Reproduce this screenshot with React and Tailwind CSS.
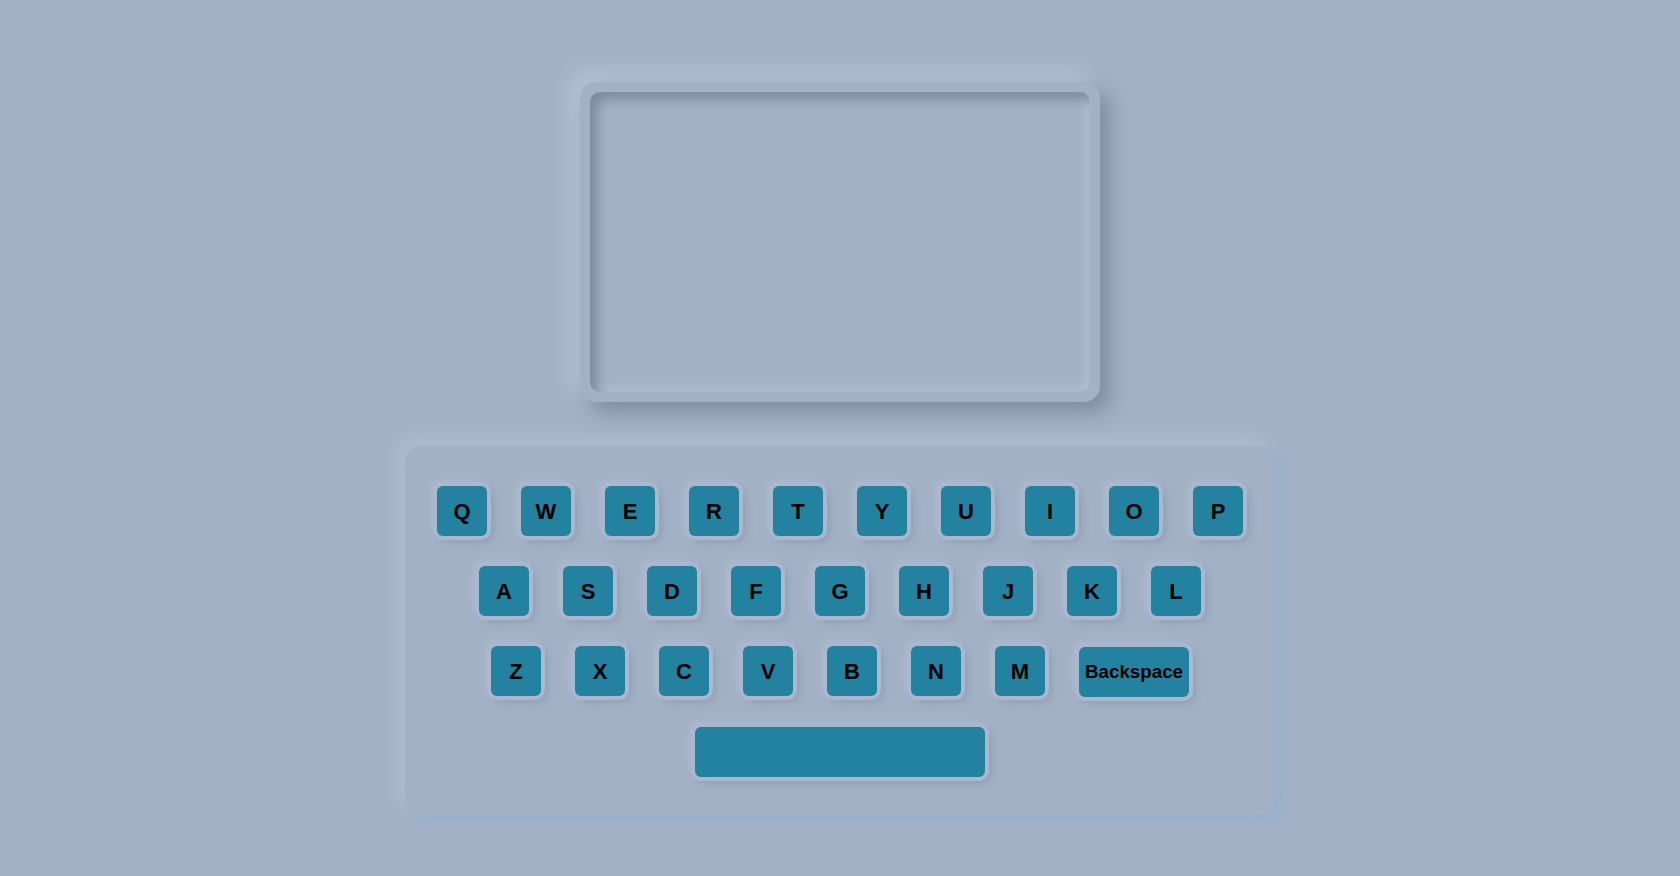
const rows = [
  ["Q", "W", "E", "R", "T", "Y", "U", "I", "O", "P"],
  ["A", "S", "D", "F", "G", "H", "J", "K", "L"],
  ["Z", "X", "C", "V", "B", "N", "M"],
];

const keyShadow =
  "shadow-[0_0_0_4px_#abb8cc,5px_5px_10px_rgba(84,100,128,0.3),-4px_-4px_8px_rgba(196,208,225,0.4)]";

function Key({ label, wide }) {
  return (
    <button
      className={`${wide ? "w-[110px] text-[18.75px] mt-[1px]" : "w-[50px] text-[22px]"} h-[50px] rounded-[6px] bg-[#23829f] font-bold text-black flex items-center justify-center ${keyShadow}`}
      style={{ fontFamily: '"Liberation Sans", Arial, sans-serif' }}
    >
      {label}
    </button>
  );
}

export default function App() {
  return (
    <div className="min-h-[876px] w-full bg-[#a3b1c6] flex flex-col items-center pt-[82px]">
      {/* monitor */}
      <div className="w-[520px] h-[320px] p-[10px] rounded-[16px] bg-[#a3b1c6] shadow-[10px_10px_20px_#7f8ca2,-10px_-10px_20px_#b6c3d6]">
        <div className="w-full h-full rounded-[10px] bg-[#a3b1c6] shadow-[inset_7px_7px_12px_#7d8aa0,inset_-4px_-4px_8px_#b4c1d4]" />
      </div>

      {/* keyboard */}
      <div className="mt-[44px] w-[871px] h-[369px] rounded-[16px] bg-[#a3b1c6] pt-[40px] flex flex-col items-center gap-[30px] shadow-[6px_6px_8px_#97b1cf,-8px_-8px_16px_#afbccf]">
        {rows.map((row, i) => (
          <div key={i} className="flex gap-[34px]">
            {row.map((k) => (
              <Key key={k} label={k} />
            ))}
            {i === 2 && <Key label="Backspace" wide />}
          </div>
        ))}
        <div className="flex">
          <button className={`w-[290px] h-[50px] rounded-[6px] bg-[#23829f] ${keyShadow}`} />
        </div>
      </div>
    </div>
  );
}
